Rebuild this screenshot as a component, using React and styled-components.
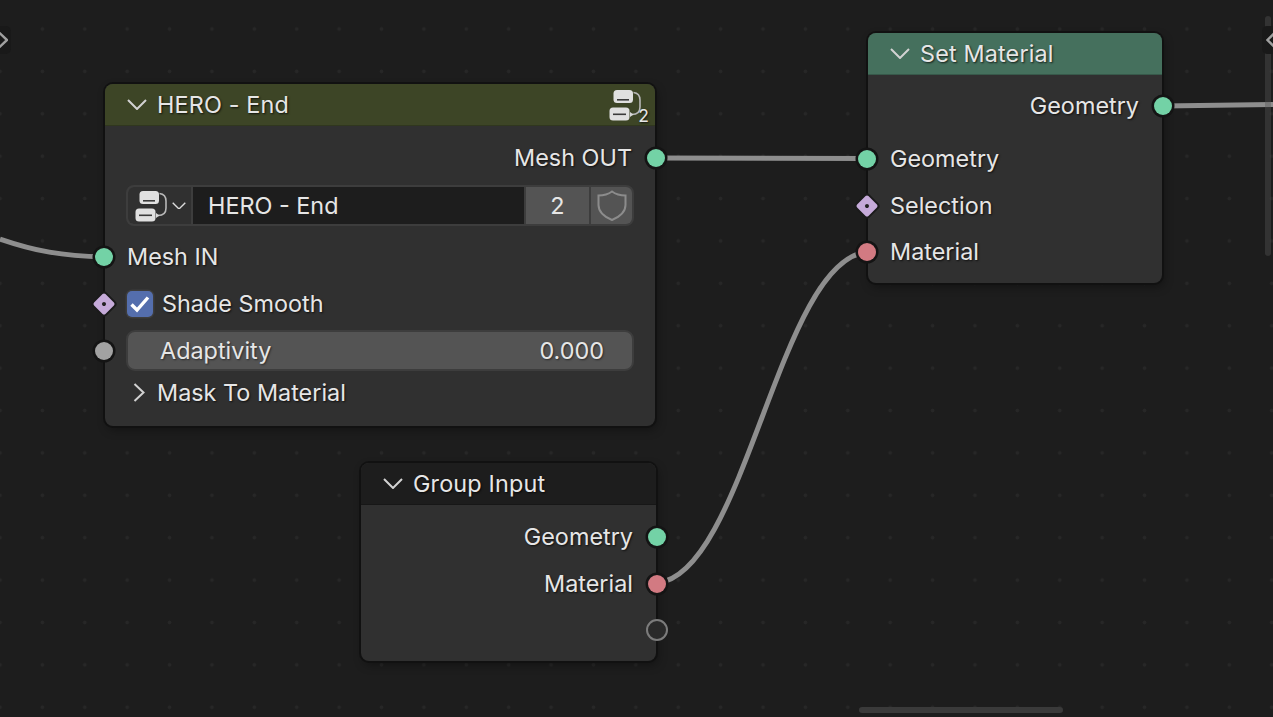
import React from "react";
import styled, { createGlobalStyle } from "styled-components";

const GlobalStyle = createGlobalStyle`
  html, body {
    margin: 0;
    padding: 0;
    height: 100%;
    background: #1d1d1d;
    overflow: hidden;
  }
  #root {
    height: 100%;
  }
`;

const Canvas = styled.div`
  position: relative;
  width: 100%;
  height: 100vh;
  overflow: hidden;
  background-color: #1d1d1d;
  background-image: radial-gradient(circle at center, #272727 0, #272727 1.6px, transparent 2.2px);
  background-size: 42.4px 42.4px;
  background-position: 21.2px 7.8px;
  font-family: Inter, "Noto Sans", sans-serif;
  font-size: 23.4px;
  color: #e6e6e6;
`;

const Wires = styled.svg`
  position: absolute;
  inset: 0;
  width: 100%;
  height: 100%;
`;

const Wire = styled.path`
  fill: none;
  stroke: #8e8e8e;
  stroke-width: 5;
`;

const Node = styled.div`
  position: absolute;
  left: ${(p) => p.$x}px;
  top: ${(p) => p.$y}px;
  width: ${(p) => p.$w}px;
  background: #303030;
  border-radius: 8px;
  box-shadow: 0 0 0 2px #111111, 2px 4px 10px rgba(0, 0, 0, 0.35);
`;

const Header = styled.div`
  display: flex;
  align-items: center;
  gap: 10px;
  height: 42px;
  padding: 0 6px 0 22px;
  background: ${(p) => p.$color};
  border-radius: 8px 8px 0 0;
  border-bottom: 1px solid rgba(0, 0, 0, 0.2);
  box-sizing: border-box;
  letter-spacing: 0.15px;
  text-shadow: 1px 1px 2px rgba(0, 0, 0, 0.75);
`;

const HeaderBadge = styled.div`
  position: relative;
  margin-left: auto;
  width: 40px;
  height: 32px;
  font-size: 17.5px;
  line-height: 20px;
`;

const BadgeCount = styled.span`
  position: absolute;
  right: 0;
  bottom: -5px;
`;

const Body = styled.div`
  display: flex;
  flex-direction: column;
  padding: ${(p) => p.$top}px 21px ${(p) => p.$bottom}px;
`;

const Row = styled.div`
  position: relative;
  display: flex;
  align-items: center;
  justify-content: ${(p) => (p.$out ? "flex-end" : "flex-start")};
  gap: 9px;
  flex: none;
  height: ${(p) => p.$h || 46.5}px;
  margin-top: ${(p) => p.$mt || 0}px;
  padding-right: ${(p) => (p.$out ? 2 : 0)}px;
  padding-left: ${(p) => (p.$out ? 0 : 1)}px;
`;

const CollapsedPanel = styled(Row)`
  gap: 12px;
  padding-left: 7px;
`;

const Label = styled.span`
  margin-bottom: 1px;
  white-space: nowrap;
  text-shadow: 1px 1px 2px rgba(0, 0, 0, 0.7);
`;

const Socket = styled.span`
  position: absolute;
  top: 50%;
  ${(p) => (p.$out ? "right: -22px" : "left: -22px")};
  width: 18px;
  height: 18px;
  margin-top: -9px;
  ${(p) => (p.$out ? "margin-right: -9px" : "margin-left: -9px")};
  border-radius: 50%;
  background: ${(p) => p.$color};
  box-shadow: 0 0 0 2.5px #141414;
`;

const EmptySocket = styled(Socket)`
  width: 18px;
  height: 18px;
  background: #2a2a2a;
  border: 2px solid #7c7c7c;
  box-shadow: none;
  margin-top: -11px;
  margin-right: -11px;
`;

const DiamondSocket = styled.span`
  position: absolute;
  top: 50%;
  left: -22px;
  width: 16px;
  height: 16px;
  margin: -8px 0 0 -8px;
  background: #c5aad9;
  border-radius: 2px;
  transform: rotate(45deg);
  box-shadow: 0 0 0 2px #1a1a1a;
  &::after {
    content: "";
    position: absolute;
    left: 6px;
    top: 6px;
    width: 4px;
    height: 4px;
    border-radius: 50%;
    background: #222222;
  }
`;

const TemplateBar = styled.div`
  display: flex;
  flex: none;
  height: 41px;
  margin-top: 3.5px;
  border-radius: 8px;
  box-sizing: border-box;
  border: 2px solid #3d3d3d;
  background: #3d3d3d;
  gap: 2px;
  overflow: hidden;
`;

const TemplatePicker = styled.div`
  display: flex;
  align-items: center;
  gap: 5px;
  width: 63px;
  padding-left: 7px;
  box-sizing: border-box;
  background: #303030;
  border-radius: 6px 0 0 6px;
`;

const TemplateName = styled.div`
  display: flex;
  align-items: center;
  flex: 1;
  padding-left: 15px;
  background: #1d1d1d;
`;

const TemplateCount = styled.div`
  display: flex;
  align-items: center;
  justify-content: center;
  width: 63px;
  background: #545454;
`;

const TemplateShield = styled.div`
  display: flex;
  align-items: center;
  justify-content: center;
  width: 41px;
  background: #545454;
`;

const CheckBox = styled.span`
  display: flex;
  align-items: center;
  justify-content: center;
  width: 26px;
  height: 26px;
  border-radius: 5px;
  background: #546ead;
  box-shadow: 0 0 0 1.5px #3d3d3d;
`;

const ValueField = styled.div`
  display: flex;
  flex: 1;
  align-items: center;
  justify-content: space-between;
  height: 41px;
  margin-left: -1px;
  padding: 0 28px 0 32px;
  box-sizing: border-box;
  background: #545454;
  border: 2px solid #3d3d3d;
  border-radius: 9px;
  text-shadow: 1px 1px 2px rgba(0, 0, 0, 0.5);
`;

const EdgeArrow = styled.div`
  position: absolute;
  top: 26px;
  box-sizing: border-box;
  display: flex;
  align-items: center;
  width: 20px;
  height: 28px;
  border-radius: 5px;
  background: #191919;
  ${(p) =>
    p.$side === "left"
      ? "left: -9px; justify-content: flex-end; padding-right: 3px;"
      : "right: -9px; justify-content: flex-start; padding-left: 4px;"}
`;

const ScrollV = styled.div`
  position: absolute;
  top: 16px;
  right: 2px;
  width: 6px;
  height: 240px;
  border-radius: 3px;
  background: rgba(85, 85, 85, 0.4);
`;

const ScrollH = styled.div`
  position: absolute;
  left: 859px;
  bottom: 4px;
  width: 204px;
  height: 6px;
  border-radius: 3px;
  background: #3a3a3a;
`;

const GREEN = "#73d2a6";
const RED = "#d27a82";
const GREY = "#a2a2a2";

const ChevronDown = ({ width = 20, color = "#d2d2d2" }) => (
  <svg width={width} height={(width * 11) / 20} viewBox="0 0 20 11" style={{ flex: "none" }}>
    <path d="M1 1 L10 10 L19 1" fill="none" stroke={color} strokeWidth="2" />
  </svg>
);

const ChevronRight = () => (
  <svg width="12" height="19" viewBox="0 0 12 19" style={{ flex: "none" }}>
    <path d="M1.5 1 L10.5 9.5 L1.5 18" fill="none" stroke="#d2d2d2" strokeWidth="2" />
  </svg>
);

const GroupIcon = () => (
  <svg width="32" height="32" viewBox="0 0 32 32" style={{ flex: "none" }}>
    <rect x="4.5" y="1" width="19.5" height="13" rx="3.5" fill="#e0e0e0" />
    <rect x="0.5" y="18.5" width="20" height="13" rx="3.5" fill="#e0e0e0" />
    <rect x="8" y="10" width="12" height="1.6" fill="#3a3a3a" />
    <rect x="4" y="24.5" width="13" height="1.6" fill="#3a3a3a" />
    <path d="M24.5 3.5 C29 4 31 7 31 11 L31 18 C31 23 28 25.5 23 25.5" fill="none" stroke="#b8b8b8" strokeWidth="1.6" />
    <path d="M21 23 L24.5 25.5 L21 28 Z" fill="#d8d8d8" />
  </svg>
);

const Check = () => (
  <svg width="20" height="18" viewBox="0 0 20 18">
    <path d="M1.5 9.5 L7 15 L18 2.5" fill="none" stroke="#ffffff" strokeWidth="3.4" />
  </svg>
);

const Shield = () => (
  <svg width="30" height="31" viewBox="0 0 30 31">
    <path
      d="M15 1.5 C19 4.5 24 5.5 28.5 5.5 L28.5 15 C28.5 22 22 27 15 30 C8 27 1.5 22 1.5 15 L1.5 5.5 C6 5.5 11 4.5 15 1.5 Z"
      fill="none"
      stroke="#8c8c8c"
      strokeWidth="2"
    />
  </svg>
);

const App = () => {
  return (
    <Canvas>
      <GlobalStyle />
      <Wires viewBox="0 0 1273 717">
        <Wire d="M0 239 C35 251 62 256 104 257" />
        <Wire d="M656 158 L867 158.5" />
        <Wire d="M1163 106 L1273 104.5" />
        <Wire d="M657 583 C745 575 779 260 867 252" />
      </Wires>

      <ScrollV />
      <ScrollH />
      <EdgeArrow $side="left">
        <svg width="10" height="16" viewBox="0 0 10 16">
          <path d="M1 0.5 L9 8 L1 15.5" fill="none" stroke="#a0a0a0" strokeWidth="2.4" />
        </svg>
      </EdgeArrow>
      <EdgeArrow $side="right">
        <svg width="10" height="16" viewBox="0 0 10 16">
          <path d="M9 0.5 L1.5 8 L9 15.5" fill="none" stroke="#a0a0a0" strokeWidth="2.4" />
        </svg>
      </EdgeArrow>

      <Node $x={105} $y={84} $w={550}>
        <Header $color="#3d4526">
          <ChevronDown />
          HERO - End
          <HeaderBadge>
            <GroupIcon />
            <BadgeCount>2</BadgeCount>
          </HeaderBadge>
        </Header>
        <Body $top={9} $bottom={12}>
          <Row $out>
            <Label>Mesh OUT</Label>
            <Socket $out $color={GREEN} />
          </Row>
          <TemplateBar>
            <TemplatePicker>
              <GroupIcon />
              <ChevronDown width={14} color="#dcdcdc" />
            </TemplatePicker>
            <TemplateName>HERO - End</TemplateName>
            <TemplateCount>2</TemplateCount>
            <TemplateShield>
              <Shield />
            </TemplateShield>
          </TemplateBar>
          <Row $mt={8}>
            <Label>Mesh IN</Label>
            <Socket $color={GREEN} />
          </Row>
          <Row>
            <DiamondSocket />
            <CheckBox>
              <Check />
            </CheckBox>
            <Label>Shade Smooth</Label>
          </Row>
          <Row $h={41} $mt={3}>
            <Socket $color={GREY} />
            <ValueField>
              <span>Adaptivity</span>
              <span>0.000</span>
            </ValueField>
          </Row>
          <CollapsedPanel $h={43}>
            <ChevronRight />
            <Label>Mask To Material</Label>
          </CollapsedPanel>
        </Body>
      </Node>

      <Node $x={868} $y={33} $w={294}>
        <Header $color="#45705d">
          <ChevronDown />
          Set Material
        </Header>
        <Body $top={8} $bottom={7.5}>
          <Row $out>
            <Label>Geometry</Label>
            <Socket $out $color={GREEN} />
          </Row>
          <Row $mt={6.5}>
            <Label>Geometry</Label>
            <Socket $color={GREEN} />
          </Row>
          <Row>
            <DiamondSocket />
            <Label>Selection</Label>
          </Row>
          <Row>
            <Label>Material</Label>
            <Socket $color={RED} />
          </Row>
        </Body>
      </Node>

      <Node $x={361} $y={463} $w={295}>
        <Header $color="#1d1d1d">
          <ChevronDown />
          Group Input
        </Header>
        <Body $top={9} $bottom={7.5}>
          <Row $out>
            <Label>Geometry</Label>
            <Socket $out $color={GREEN} />
          </Row>
          <Row $out>
            <Label>Material</Label>
            <Socket $out $color={RED} />
          </Row>
          <Row $out>
            <EmptySocket $out />
          </Row>
        </Body>
      </Node>
    </Canvas>
  );
};

export default App;
